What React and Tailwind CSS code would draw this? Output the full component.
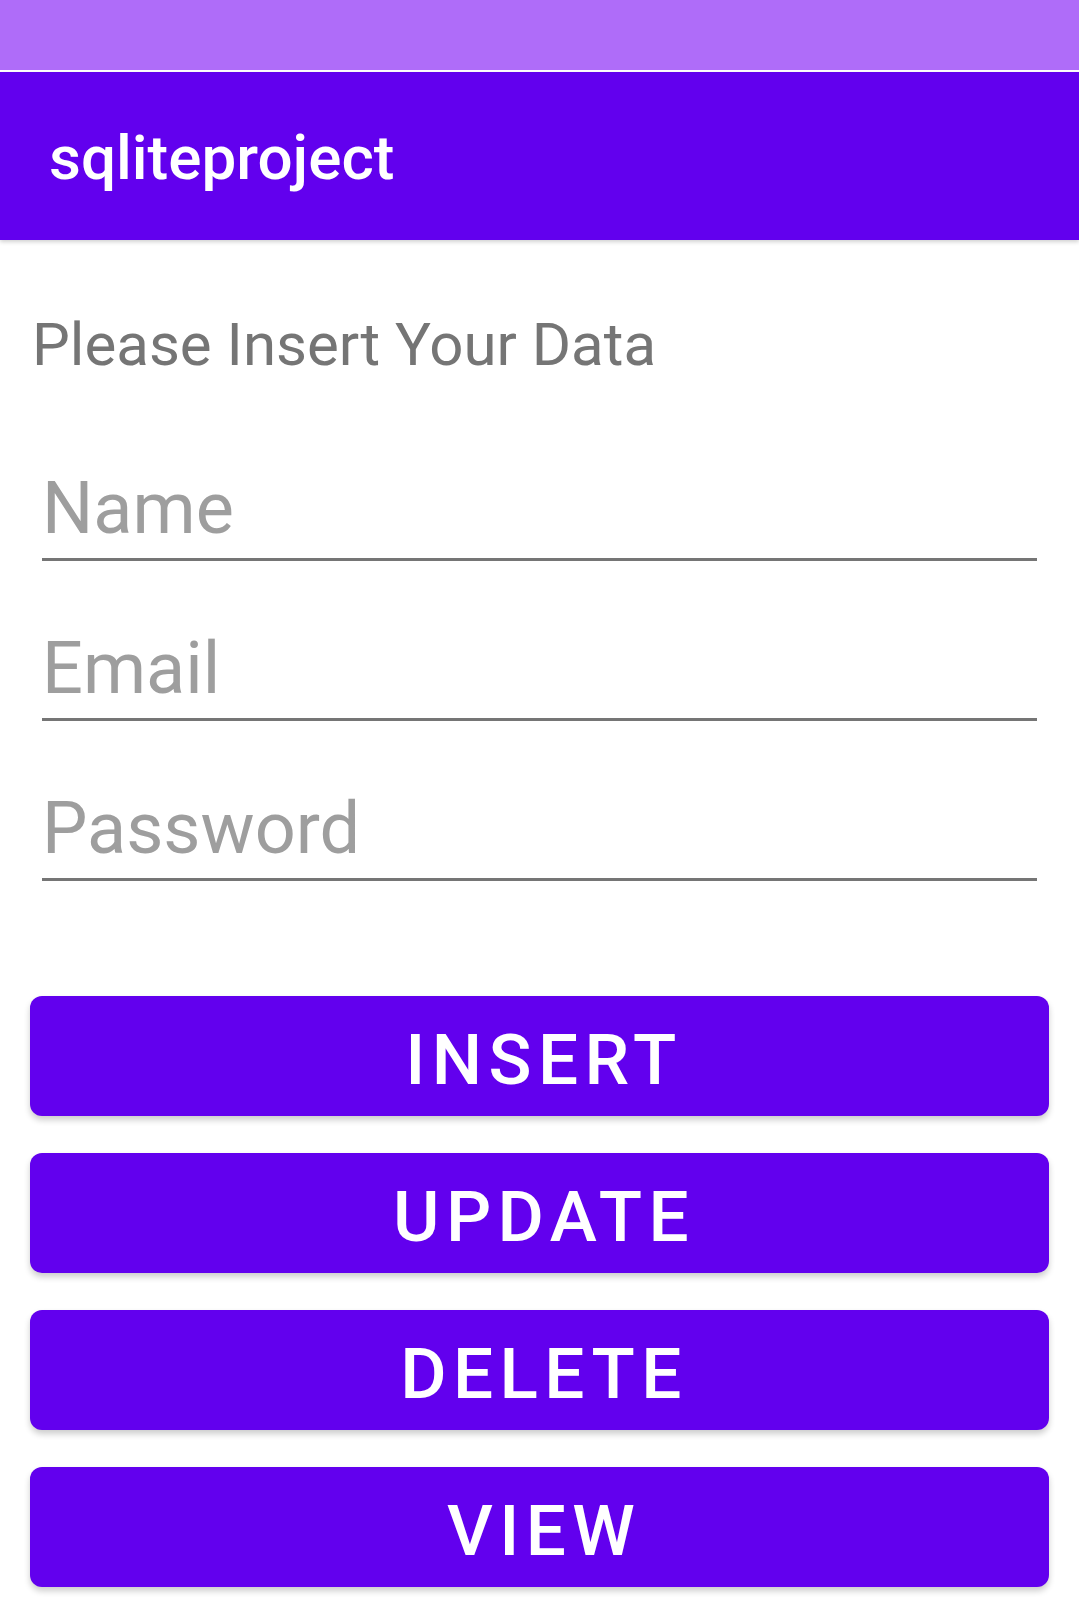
import React from 'react';

const fields = ['Name', 'Email', 'Password'];
const actions = ['Insert', 'Update', 'Delete', 'View'];

const App = () => {
  return (
    <div className="min-h-screen w-[1079px] bg-white font-['Roboto',sans-serif] overflow-hidden">
      {/* status bar */}
      <div className="h-[70px] bg-[#af6cf9]" />
      <div className="h-[2px] bg-white" />

      {/* toolbar */}
      <div className="h-[168px] bg-[#6200ee] pl-[49px] pt-[55px] shadow-[0_2px_4px_rgba(0,0,0,0.18)] relative">
        <h1 className="text-[62px] leading-none font-medium text-white">sqliteproject</h1>
      </div>

      {/* form */}
      <div className="pt-[75px]">
        <p className="pl-[32px] text-[60px] leading-none text-[#757575]">Please Insert Your Data</p>

        <div className="mt-[98px] mx-[42px] flex flex-col gap-[72px]">
          {fields.map(f => (
            <div key={f} className="border-b-[3px] border-[#757575] pb-[13px]">
              <span className="block text-[72px] leading-none text-[#9e9e9e]">{f}</span>
            </div>
          ))}
        </div>

        <div className="mt-[115px] mx-[30px] flex flex-col gap-[37px]">
          {actions.map(a => (
            <button
              key={a}
              className="h-[120px] w-full rounded-[12px] bg-[#6200ee] text-white uppercase text-[71px] leading-none font-medium tracking-[0.09em] pt-[7px] pl-[9px] flex items-center justify-center shadow-[0_4px_6px_rgba(0,0,0,0.2)]"
            >
              {a}
            </button>
          ))}
        </div>
      </div>
    </div>
  );
};

export default App;
